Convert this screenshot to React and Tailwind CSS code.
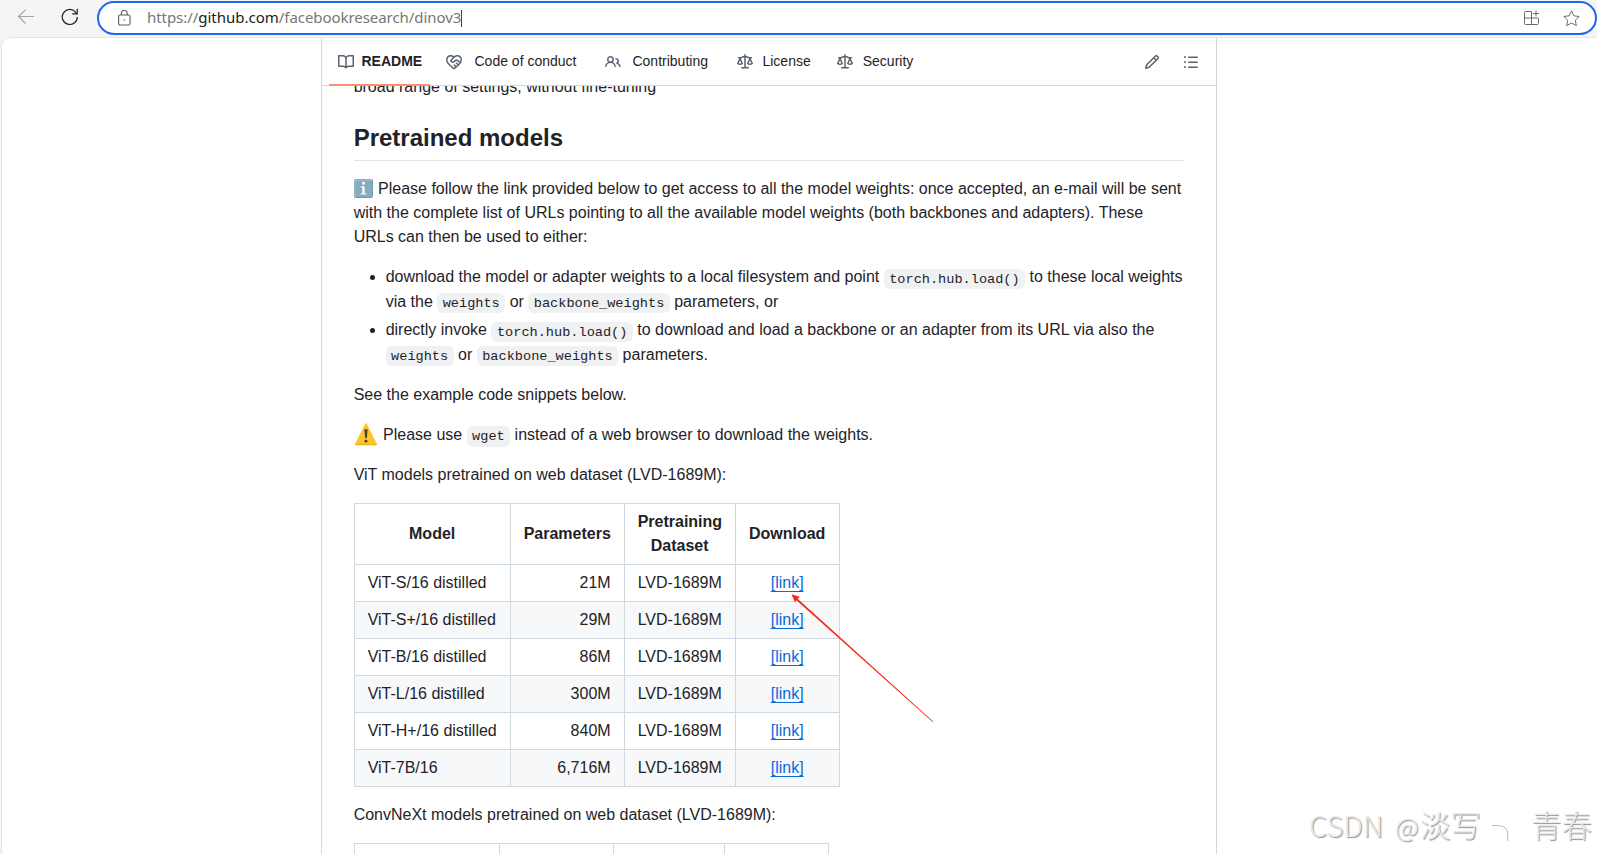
// 16px octicons
const icons = {
  book: 'M0 1.75A.75.75 0 0 1 .75 1h4.253c1.227 0 2.317.59 3 1.501A3.743 3.743 0 0 1 11.006 1h4.245a.75.75 0 0 1 .75.75v10.5a.75.75 0 0 1-.75.75h-4.507a2.25 2.25 0 0 0-1.591.659l-.622.621a.75.75 0 0 1-1.06 0l-.622-.621A2.25 2.25 0 0 0 5.258 13H.75a.75.75 0 0 1-.75-.75Zm7.251 10.324.004-5.073-.002-2.253A2.25 2.25 0 0 0 5.003 2.5H1.5v9h3.757a3.75 3.75 0 0 1 1.994.574ZM8.755 4.75l-.004 7.322a3.752 3.752 0 0 1 1.992-.572H14.5v-9h-3.495a2.25 2.25 0 0 0-2.25 2.25Z',
  conduct: 'M8.048 2.241c.964-.709 2.079-1.238 3.325-1.241a4.616 4.616 0 0 1 3.282 1.355c.41.408.757.86.996 1.428.238.568.348 1.206.347 1.968 0 2.193-1.505 4.254-3.081 5.862-1.496 1.526-3.213 2.796-4.249 3.563l-.22.163a.749.749 0 0 1-.895 0l-.221-.163c-1.036-.767-2.753-2.037-4.249-3.563C1.51 10.008.007 7.952.002 5.762a4.614 4.614 0 0 1 1.353-3.407C3.123.585 6.223.537 8.048 2.24Zm-1.153.983c-1.25-1.033-3.321-.967-4.48.191a3.115 3.115 0 0 0-.913 2.335c0 1.556 1.109 3.24 2.652 4.813C5.463 11.898 6.96 13.032 8 13.805c.353-.262.758-.565 1.191-.905l-1.326-1.223a.75.75 0 0 1 1.018-1.102l1.48 1.366c.328-.281.659-.577.984-.887L9.99 9.802a.75.75 0 1 1 1.019-1.103l1.384 1.28c.295-.329.566-.661.81-.995L12.92 8.7l-1.167-1.168c-.674-.671-1.78-.664-2.474.03-.268.269-.538.537-.802.797-.893.882-2.319.843-3.185-.032-.346-.35-.693-.697-1.043-1.047a.75.75 0 0 1-.04-1.016c.162-.191.336-.401.52-.623.62-.748 1.356-1.637 2.166-2.417Zm7.112 4.442c.313-.65.491-1.293.491-1.916v-.001c0-.614-.088-1.045-.23-1.385-.143-.339-.357-.633-.673-.949a3.111 3.111 0 0 0-2.218-.915c-1.092.003-2.165.627-3.226 1.602-.823.755-1.554 1.637-2.228 2.45l-.127.154.562.566a.755.755 0 0 0 1.066.02l.794-.79c1.258-1.258 3.312-1.31 4.594-.032.396.394.792.791 1.173 1.173Z',
  people: 'M2 5.5a3.5 3.5 0 1 1 5.898 2.549 5.508 5.508 0 0 1 3.034 4.084.75.75 0 1 1-1.482.235 4 4 0 0 0-7.9 0 .75.75 0 0 1-1.482-.236A5.507 5.507 0 0 1 3.102 8.05 3.493 3.493 0 0 1 2 5.5ZM11 4a3.001 3.001 0 0 1 2.22 5.018 5.01 5.01 0 0 1 2.56 3.012.749.749 0 0 1-.885.954.752.752 0 0 1-.549-.514 3.507 3.507 0 0 0-2.522-2.372.75.75 0 0 1-.574-.73v-.352a.75.75 0 0 1 .416-.672A1.5 1.5 0 0 0 11 5.5.75.75 0 0 1 11 4Zm-5.5-.5a2 2 0 1 0-.001 3.999A2 2 0 0 0 5.5 3.5Z',
  law: 'M8.75.75V2h.985c.304 0 .603.08.867.231l1.29.736c.038.022.08.033.124.033h2.234a.75.75 0 0 1 0 1.5h-.427l2.111 4.692a.75.75 0 0 1-.154.838l-.53-.53.529.531-.001.002-.002.002-.006.006-.006.005-.01.01-.045.04c-.21.176-.441.327-.686.45C14.556 10.78 13.88 11 13 11a4.498 4.498 0 0 1-2.023-.454 3.544 3.544 0 0 1-.686-.45l-.045-.04-.016-.015-.006-.006-.004-.004v-.001a.75.75 0 0 1-.154-.838L12.178 4.5h-.162c-.305 0-.604-.079-.868-.231l-1.29-.736a.245.245 0 0 0-.124-.033H8.75V13h2.5a.75.75 0 0 1 0 1.5h-6.5a.75.75 0 0 1 0-1.5h2.5V3.5h-.984a.245.245 0 0 0-.124.033l-1.289.737c-.265.15-.564.23-.869.23h-.162l2.112 4.692a.75.75 0 0 1-.154.838l-.53-.53.529.531-.001.002-.002.002-.006.006-.016.015-.045.04c-.21.176-.441.327-.686.45C4.556 10.78 3.88 11 3 11a4.498 4.498 0 0 1-2.023-.454 3.544 3.544 0 0 1-.686-.45l-.045-.04-.016-.015-.006-.006-.004-.004v-.001a.75.75 0 0 1-.154-.838L2.178 4.5H1.75a.75.75 0 0 1 0-1.5h2.234a.249.249 0 0 0 .125-.033l1.288-.737c.265-.15.564-.23.869-.23h.984V.75a.75.75 0 0 1 1.5 0Zm2.945 8.477c.285.135.718.273 1.305.273s1.02-.138 1.305-.273L13 6.327Zm-10 0c.285.135.718.273 1.305.273s1.02-.138 1.305-.273L3 6.327Z',
  pencil: 'M11.013 1.427a1.75 1.75 0 0 1 2.474 0l1.086 1.086a1.75 1.75 0 0 1 0 2.474l-8.61 8.61c-.21.21-.47.364-.756.445l-3.251.93a.75.75 0 0 1-.927-.928l.929-3.25c.081-.286.235-.547.445-.758l8.61-8.61Zm.176 4.823L9.75 4.81l-6.286 6.287a.253.253 0 0 0-.064.108l-.558 1.953 1.953-.558a.253.253 0 0 0 .108-.064Zm1.238-3.763a.25.25 0 0 0-.354 0L10.811 3.75l1.439 1.44 1.263-1.263a.25.25 0 0 0 0-.354Z',
  list: 'M5.75 2.5h8.5a.75.75 0 0 1 0 1.5h-8.5a.75.75 0 0 1 0-1.5Zm0 5h8.5a.75.75 0 0 1 0 1.5h-8.5a.75.75 0 0 1 0-1.5Zm0 5h8.5a.75.75 0 0 1 0 1.5h-8.5a.75.75 0 0 1 0-1.5ZM2 14a1 1 0 1 1 0-2 1 1 0 0 1 0 2Zm1-6a1 1 0 1 1-2 0 1 1 0 0 1 2 0ZM2 4a1 1 0 1 1 0-2 1 1 0 0 1 0 2Z',
}

const tabs = [
  { label: 'Code of conduct', icon: 'conduct', className: 'gap-[12.5px] mr-[28.5px]' },
  { label: 'Contributing', icon: 'people', className: 'gap-[11.5px] mr-[29.5px]' },
  { label: 'License', icon: 'law', className: 'gap-[9px] mr-[26px]' },
  { label: 'Security', icon: 'law', className: 'gap-[10px]' },
]

const models = [
  ['ViT-S/16 distilled', '21M'],
  ['ViT-S+/16 distilled', '29M'],
  ['ViT-B/16 distilled', '86M'],
  ['ViT-L/16 distilled', '300M'],
  ['ViT-H+/16 distilled', '840M'],
  ['ViT-7B/16', '6,716M'],
]

const cell = 'border border-[#d1d9e0] px-[13px] py-1.5'

function Octicon({ name }) {
  return (
    <svg className="mt-px h-4 w-4 shrink-0 fill-[#59636e]" viewBox="0 0 16 16">
      <path d={icons[name]} />
    </svg>
  )
}

function Code({ children }) {
  return (
    <code className="rounded-md bg-[#eff1f3] px-[0.4em] py-[0.2em] font-['Liberation_Mono',monospace] text-[13.6px]">
      {children}
    </code>
  )
}

function AddressBar() {
  return (
    <header className="flex h-[37px] shrink-0 items-start">
      <svg className="ml-[17px] mt-[9px] h-4 w-[18px]" viewBox="0 0 18 16" fill="none" stroke="#a3a3a3" strokeWidth="1.1">
        <path d="M17 7.5H1.5M8.5 .8 1.5 7.5l7 7" />
      </svg>
      <svg className="ml-[26px] mt-2 h-[18px] w-[18px]" viewBox="0 0 18 18" fill="none" stroke="#222" strokeWidth="1.2">
        <path d="M16.3 9a7.5 7.5 0 1 1-1.8-4.9L16 5.8" />
        <path d="M16.2 .8v5h-5" />
      </svg>
      <div className="ml-[18px] mt-px flex h-[34px] w-[1500px] items-center rounded-full border-2 border-[#1f68e8] bg-white">
        <svg className="ml-[19px] h-4 w-[13px]" viewBox="0 0 13 16" fill="none" stroke="#5c5c5c" strokeWidth="1.1">
          <rect x=".6" y="5" width="11.4" height="10" rx="1.6" />
          <path d="M3.4 5V3.2a2.9 2.9 0 0 1 5.8 0V5" />
          <circle cx="6.3" cy="10" r=".8" fill="#5c5c5c" stroke="none" />
        </svg>
        <div className="ml-4 flex h-[17px] items-center whitespace-nowrap border-r border-[#444] pb-0.5 font-['Noto_Sans',sans-serif] text-[15px] tracking-[-0.06px] text-[#767676]">
          <span>https://<span className="tracking-normal text-[#1b1b1b]">github.com</span>/facebookresearch/dinov3</span>
        </div>
        <svg className="ml-auto h-4 w-[15px]" viewBox="0 0 15 16" fill="none" stroke="#6b6b6b" strokeWidth="1">
          <path d="M7.5 1.5h-6a1 1 0 0 0-1 1v11a1 1 0 0 0 1 1h12a1 1 0 0 0 1-1V9a1 1 0 0 0-1-1H.5M7.5 1.5v13M12 .5v6M9 3.5h6" />
        </svg>
        <svg className="ml-6 mr-[15px] h-[17px] w-[17px]" viewBox="0 0 17 17" fill="none" stroke="#6b6b6b" strokeWidth="1" strokeLinejoin="round">
          <path d="m8.5.9 2.3 4.9 5.4.7-3.9 3.7 1 5.4-4.8-2.6-4.8 2.6 1-5.4L.8 6.5l5.4-.7z" />
        </svg>
      </div>
    </header>
  )
}

function TabBar() {
  return (
    <nav className="flex h-12 shrink-0 items-stretch border-b border-[#d1d9e0] pl-[7px] text-sm">
      <div className="-mb-px flex w-[101px] items-center gap-[7.5px] border-b-2 border-[#fd8c73] pl-[9px] font-bold">
        <Octicon name="book" />
        <span className="-mt-px">README</span>
      </div>
      <div className="ml-4 flex items-center">
        {tabs.map(({ label, icon, className }) => (
          <div key={label} className={'flex items-center whitespace-nowrap ' + className}>
            <Octicon name={icon} />
            <span className="-mt-0.5">{label}</span>
          </div>
        ))}
      </div>
      <div className="ml-auto mr-[17px] flex items-center gap-[23px]">
        <Octicon name="pencil" />
        <Octicon name="list" />
      </div>
    </nav>
  )
}

function InfoIcon() {
  return (
    <svg className="mr-[5.4px] inline-block h-[19px] w-[19px] align-[-4px]" viewBox="0 0 19 19">
      <rect x=".5" y=".5" width="18" height="18" rx="1" fill="#84aebf" stroke="#6c9bb0" />
      <path d="M1 18V1h17" fill="none" stroke="#a4c8d5" />
      <circle cx="9.5" cy="4.2" r="1.5" fill="#fff" />
      <path d="M6.8 7.2h3.8v7.2h1.9v1.2H6.5v-1.2h1.9V8.4H6.8z" fill="#fff" />
    </svg>
  )
}

function WarningIcon() {
  return (
    <svg className="-mt-1 mr-[5.4px] inline-block h-6 w-6 align-[-6px]" viewBox="0 0 24 24">
      <path d="M12 1.9 22.4 22.2H1.6z" fill="#fcc62b" stroke="#fcc62b" strokeWidth="1.4" strokeLinejoin="round" />
      <path d="M1.2 22.8h21.6" stroke="#e2a610" strokeWidth=".8" />
      <path d="M10.4 7.6q1.6-1 3.2 0l-.7 8.2q-.9.8-1.8 0z" fill="#424242" />
      <circle cx="12" cy="19" r="1.5" fill="#424242" />
    </svg>
  )
}

function ModelTable() {
  return (
    <table className="mb-4 w-[486px] table-fixed border-collapse">
      <colgroup>
        <col className="w-[156px]" />
        <col className="w-[114px]" />
        <col className="w-[111px]" />
        <col className="w-[104px]" />
      </colgroup>
      <thead>
        <tr>
          <th className={cell}>Model</th>
          <th className={cell}>Parameters</th>
          <th className={cell}>Pretraining Dataset</th>
          <th className={cell}>Download</th>
        </tr>
      </thead>
      <tbody>
        {models.map(([name, params]) => (
          <tr key={name} className="even:bg-[#f6f8fa]">
            <td className={cell + ' whitespace-nowrap'}>{name}</td>
            <td className={cell + ' text-right'}>{params}</td>
            <td className={cell + ' whitespace-nowrap'}>LVD-1689M</td>
            <td className={cell + ' text-center'}>
              <a href="#" className="text-[#0969da] underline underline-offset-[3.2px]">[link]</a>
            </td>
          </tr>
        ))}
      </tbody>
    </table>
  )
}

function Readme() {
  return (
    <article className="min-h-0 flex-1 overflow-hidden pl-[31.65px] pr-8 text-base">
      <p className="-mt-[11px]">broad range of settings, without fine-tuning</p>
      <h2 className="mb-4 mt-6 h-[38.3px] border-b border-[#dfe4e9] text-2xl font-bold leading-[30px]">Pretrained models</h2>
      <p className="mb-4">
        <InfoIcon />
        Please follow the link provided below to get access to all the model weights: once accepted, an e-mail will be sent
        with the complete list of URLs pointing to all the available model weights (both backbones and adapters). These
        URLs can then be used to either:
      </p>
      <ul className="mb-[15.75px] list-disc pl-8">
        <li>
          download the model or adapter weights to a local filesystem and point <Code>torch.hub.load()</Code> to these
          local weights via the <Code>weights</Code> or <Code>backbone_weights</Code> parameters, or
        </li>
        <li className="mt-[4.25px]">
          directly invoke <Code>torch.hub.load()</Code> to download and load a backbone or an adapter from its URL via
          also the <Code>weights</Code> or <Code>backbone_weights</Code> parameters.
        </li>
      </ul>
      <p className="mb-4">See the example code snippets below.</p>
      <p className="mb-4">
        <WarningIcon />
        Please use <Code>wget</Code> instead of a web browser to download the weights.
      </p>
      <p className="mb-4">ViT models pretrained on web dataset (LVD-1689M):</p>
      <ModelTable />
      <p className="mb-4">ConvNeXt models pretrained on web dataset (LVD-1689M):</p>
      {/* only the top edge of the next table is in view */}
      <div className="grid h-16 w-[475px] grid-cols-[145px_114px_111px_103px] divide-x divide-[#d1d9e0] border border-[#d1d9e0]">
        <div />
        <div />
        <div />
        <div />
      </div>
    </article>
  )
}

export default function App() {
  return (
    <div className="relative flex h-[854px] w-[1597px] flex-col overflow-hidden bg-[#f5f5f5] font-['Liberation_Sans',Arial,sans-serif] leading-normal text-[#1f2328]">
      <AddressBar />
      <div className="ml-px flex min-h-0 flex-1 rounded-tl-[9px] border-l border-t border-[#e6e6e6] bg-white">
        <main className="ml-[319px] flex w-[896px] flex-col border-x border-[#d1d9e0]">
          <TabBar />
          <Readme />
        </main>
      </div>

      {/* arrow pointing at the first download link */}
      <svg className="pointer-events-none absolute left-[790px] top-[593px] h-[130px] w-[145px]" viewBox="0 0 145 130" fill="#fd2716">
        <path d="M1.5 1.2 9.8 3.8 7.6 5.8 143.2 128.5l-.6.6L6.4 7.3 5 9.6z" />
      </svg>

      <div className="pointer-events-none absolute left-[1309px] top-[802px] flex items-baseline whitespace-nowrap font-['Noto_Sans_CJK_SC',sans-serif] text-[30.5px] font-light leading-[44px] text-[#e9e9e9] [text-shadow:1px_1px_1px_#8f8f8f]">
        <span className="w-[86px] text-[29px]">CSDN</span>
        <span className="w-[25px] text-[26px]">@</span>
        <span className="w-[72px]">淡写</span>
        <svg className="h-4 w-[17px] translate-y-1" viewBox="0 0 17 16" fill="none" stroke="#b9b9b9">
          <path d="M0 .6h6q9.8 0 9.8 9V16" />
        </svg>
        <span className="ml-[22px]">青春</span>
      </div>
    </div>
  )
}
